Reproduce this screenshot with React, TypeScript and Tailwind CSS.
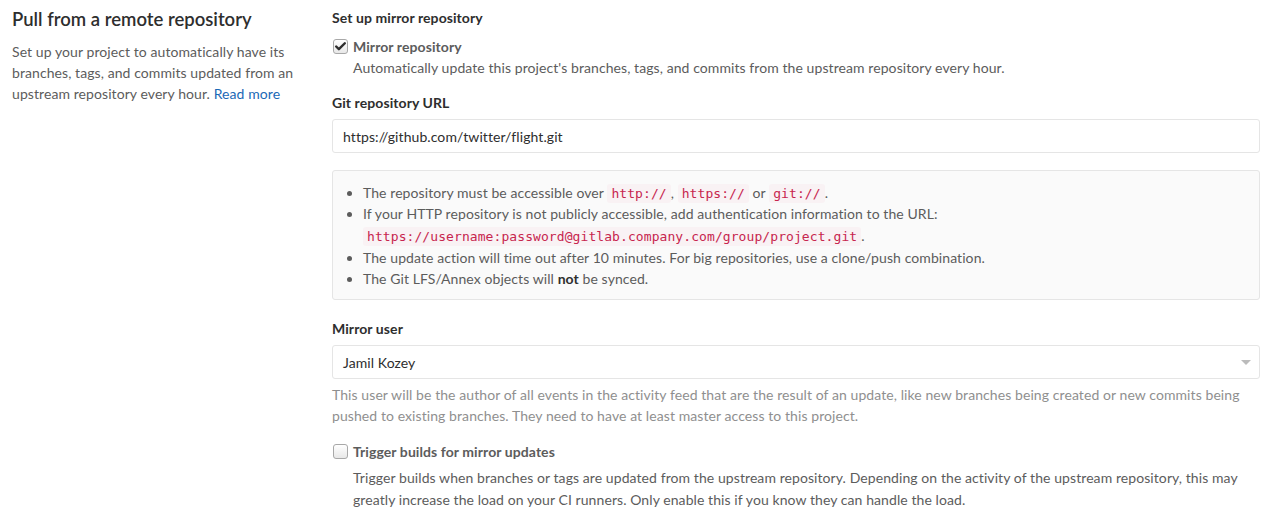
import { Check } from 'lucide-react';

function Code({ children }: { children: React.ReactNode }) {
  return (
    <code className="rounded-[3px] bg-[#f9f2f4] px-[4px] py-[2px] font-['DejaVu_Sans_Mono',monospace] text-[13px] leading-none text-[#c7254e]">
      {children}
    </code>
  );
}

function Box({ checked }: { checked?: boolean }) {
  return (
    <span className="mt-[3px] flex h-[15px] w-[15px] shrink-0 items-center justify-center rounded-[3px] border border-[#a8a8a8] bg-gradient-to-b from-white to-[#e8e8e8]">
      {checked ? <Check className="h-[13px] w-[13px] text-[#2e2e2e]" strokeWidth={4.5} /> : null}
    </span>
  );
}

export default function App() {
  return (
    <div className="flex bg-white pl-[12px] pr-[7px] pt-[7px] font-['Lato',sans-serif] text-[14px] leading-[21px] tracking-[0.08px] text-[#5c5c5c]">
      <div className="w-[320px] shrink-0 pr-[20px]">
        <h4 className="mb-[10px] text-[18.5px] font-semibold leading-[24px] tracking-normal text-[#2e2e2e]">
          Pull from a remote repository
        </h4>
        <p>
          Set up your project to automatically have its branches, tags, and commits updated from an upstream
          repository every hour. <a className="text-[#1b69b6]">Read more</a>
        </p>
      </div>

      <div className="flex-1">
        <div className="mb-[8px] font-bold text-[#2e2e2e]">Set up mirror repository</div>
        <div className="flex gap-[5px] pl-[1px]">
          <Box checked />
          <div>
            <div className="font-bold text-[#5c5c5c]">Mirror repository</div>
            <div>Automatically update this project's branches, tags, and commits from the upstream repository every hour.</div>
          </div>
        </div>

        <div className="mt-[14px] mb-[6px] font-bold text-[#2e2e2e]">Git repository URL</div>
        <div className="flex h-[34px] items-center rounded-[3px] border border-[#e5e5e5] px-[10px] text-[#2e2e2e]">
          https://github.com/twitter/flight.git
        </div>

        <div className="mt-[17px] rounded-[3px] border border-[#e5e5e5] bg-[#fafafa] pt-[11px] pb-[10px] pl-[30px] pr-[10px]">
          <ul className="list-disc">
            <li>
              The repository must be accessible over <Code>http://</Code>, <Code>https://</Code> or <Code>git://</Code>.
            </li>
            <li>
              If your HTTP repository is not publicly accessible, add authentication information to the URL:
              <div className="mt-[1px] mb-[1px]">
                <Code>https://username:password@gitlab.company.com/group/project.git</Code>.
              </div>
            </li>
            <li>The update action will time out after 10 minutes. For big repositories, use a clone/push combination.</li>
            <li>
              The Git LFS/Annex objects will <strong className="text-[#2e2e2e]">not</strong> be synced.
            </li>
          </ul>
        </div>

        <div className="mt-[18px] mb-[6px] font-bold text-[#2e2e2e]">Mirror user</div>
        <div className="flex h-[34px] items-center justify-between rounded-[3px] border border-[#e5e5e5] px-[10px] text-[#2e2e2e]">
          <span>Jamil Kozey</span>
          <span className="mr-[-2px] h-0 w-0 border-x-[5px] border-t-[5px] border-x-transparent border-t-[#bbbbbb]" />
        </div>
        <p className="mt-[5px] text-[#8f8f8f]">
          This user will be the author of all events in the activity feed that are the result of an update, like new
          branches being created or new commits being pushed to existing branches. They need to have at least master
          access to this project.
        </p>

        <div className="mt-[15px] flex gap-[5px] pl-[1px]">
          <Box />
          <div>
            <div className="font-bold text-[#5c5c5c]">Trigger builds for mirror updates</div>
            <div className="mt-[5px] leading-[22px]">
              Trigger builds when branches or tags are updated from the upstream repository. Depending on the activity of
              the upstream repository, this may greatly increase the load on your CI runners. Only enable this if you know
              they can handle the load.
            </div>
          </div>
        </div>
      </div>
    </div>
  );
}
